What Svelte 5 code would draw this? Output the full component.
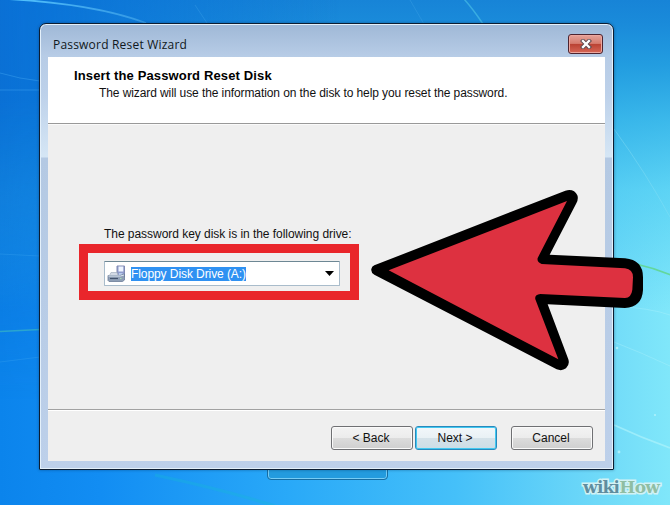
<script>
  const title = 'Password Reset Wizard';
  const drive = 'Floppy Disk Drive (A:)';
</script>

<main class="desktop">
  <svg class="wallpaper" viewBox="0 0 670 505" aria-hidden="true">
    <defs>
      <linearGradient id="streak"><stop stop-color="#55c6ff" /><stop offset="1" stop-color="#55b5f0" stop-opacity=".5" /></linearGradient>
    </defs>
    <g fill="none">
      <path d="M8 -1Q95 4 146 23" stroke="url(#streak)" stroke-width="1.8" />
      <path d="M0 73Q20 79 40 81M0 90h40" stroke="#3ba0f0" stroke-opacity=".5" />
      <path d="M0 254l40 2M0 362l40-5" stroke="#3aa4f2" stroke-opacity=".35" />
      <path d="M0 331.500L40 329.500" stroke="#2aa5cf" stroke-width="1.500" />
      <path d="M464 -1Q473 9 483 24" stroke="#4fc4e8" stroke-width="1.500" stroke-opacity=".6" />
      <path d="M410 0l14 24M195 5l12 18" stroke="#55b5f0" stroke-opacity=".25" />
      <path d="M614 129Q646 173 670 217" stroke="#8de2f5" stroke-opacity=".4" />
      <path d="M636 264Q654 268 671 275" stroke="#63d79c" stroke-width="1.700" />
      <path d="M614 342Q640 352 670 366M614 306Q650 308 670 315" stroke="#b2f4fb" stroke-opacity=".35" />
      <path d="M614 425Q642 438 670 448" stroke="#b4f5fb" stroke-width="1.800" stroke-opacity=".6" />
      <path d="M155 475Q225 490 275 506" stroke="#16b6d8" stroke-width="3" stroke-opacity=".35" />
    </g>
    <g fill="#c7f8fc" fill-opacity=".7">
      <circle cx="617" cy="348" r="1.300" /><circle cx="619" cy="452" r="1.400" /><circle cx="655" cy="415" r="1" />
    </g>
  </svg>

  <div class="behind"></div>

  <section class="window">
    <header class="titlebar">
      <span class="title">{title}</span>
      <button class="close" aria-label="Close">
        <svg width="12" height="10" viewBox="0 0 12 10">
          <path d="M3 2l6 6M9 2l-6 6" stroke="#5b4a50" stroke-width="4.200" stroke-linecap="square" />
          <path d="M3 2l6 6M9 2l-6 6" stroke="#fff" stroke-width="2.300" stroke-linecap="square" />
        </svg>
      </button>
    </header>
    <div class="client">
      <div class="heading">
        <h1><span>Insert the Password Reset Disk</span></h1>
        <p><span>The wizard will use the information on the disk to help you reset the password.</span></p>
      </div>
      <div class="body">
        <label for="drive"><span>The password key disk is in the following drive:</span></label>
        <div class="highlight">
          <div class="combo" id="drive">
            <svg class="disk" width="19" height="18" viewBox="0 0 19 18">
              <path d="M10 1h7.500v11H10z" fill="#8f9bcb" stroke="#8089b2" />
              <path d="M11.500 1.500h4.800v5h-4.800z" fill="#eef4ff" />
              <path d="M12 8h3.500v4H12z" fill="#b9cbed" />
              <path d="M4 7.500h6l1.500 4H2z" fill="#d3dae5" stroke="#a5b0c0" stroke-width=".7" />
              <path d="M1 10.500h12l4.500-1.500v6l-2 1.500H2l-1-1z" fill="#8f9fb6" stroke="#6b7c97" stroke-width=".8" />
              <path d="M1.500 11h12l3.500-1" fill="none" stroke="#dfe8f2" />
              <path d="M3 13.500h8" stroke="#42526c" stroke-width="1.200" />
              <path d="M13 13.500h1.500" stroke="#a8e0b1" stroke-width="1.200" />
            </svg>
            <span class="selected">{drive}</span>
            <svg class="caret" width="9" height="5" viewBox="0 0 9 5"><path d="M0 0h9L4.500 5z" /></svg>
          </div>
        </div>
      </div>
      <footer>
        <button class="btn"><span>&lt; Back</span></button>
        <button class="btn primary"><span>Next &gt;</span></button>
        <button class="btn cancel"><span>Cancel</span></button>
      </footer>
    </div>
  </section>

  <svg class="arrow" viewBox="0 0 930 600" aria-hidden="true">
    <path d="M43 256L616 32Q642 25 652 46Q656 56 649 70L569 224L795 235Q849 240 849 292V330Q846 381 795 384L563 373L625 538Q630 554 618 565Q606 574 590 568L43 284Q32 278 34 267Q35 260 43 256Z" />
    <path fill="#dd3140" d="M86 271L621 63L533 234Q530 246 545 252L795 265Q819 268 819 292L817 329Q814 353 795 354L541 342Q523 344 526 358L595 538Z" />
  </svg>

  <div class="watermark"><span>wiki</span><span class="how">How</span></div>
</main>

<style>
  :global(body) { margin: 0; }
  .desktop {
    position: relative; width: 670px; height: 505px; overflow: hidden;
    font-family: "Liberation Sans", Arial, sans-serif; color: #111;
    background: linear-gradient(90deg, #0b84ec 0, #128df3 15%, #29a9f8 43%, #45c0f9 68%, #70daf8 90%, #80e7fa 100%);
  }
  .desktop::before {
    content: ""; position: absolute; inset: 0;
    background: linear-gradient(180deg, #1784d7 0, #1a8bda 24px, rgba(27,151,222,.92) 65px, rgba(30,165,228,.7) 120px, rgba(50,188,238,.45) 190px, transparent 310px);
  }
  .desktop::after {
    content: ""; position: absolute; left: 0; top: 0; width: 340px; height: 400px;
    background: linear-gradient(90deg, #0a70d5, rgba(9,114,216,.9) 15%, transparent);
    -webkit-mask-image: linear-gradient(#000 25%, transparent);
    mask-image: linear-gradient(#000 25%, transparent);
  }
  .wallpaper { position: absolute; inset: 0; width: 670px; height: 505px; z-index: 1; }
  .behind {
    position: absolute; z-index: 1; left: 267px; top: 450px; width: 119px; height: 28px;
    border: 1px solid #176da2; border-radius: 4px;
    box-shadow: inset 0 0 0 1px #76ccf5; background: #239bde;
  }
  .window {
    position: absolute; z-index: 2; left: 39px; top: 23px; width: 575px; height: 447px;
    box-sizing: border-box; border: 1px solid #0c1d32; border-radius: 7px 7px 1px 1px;
    padding: 0 8px 8px; display: flex; flex-direction: column;
    background: linear-gradient(#9fb8d6 0, #b7cce6 32px, #bdd1ea 70px, #d5e6f5 133px, #b4c9e3 134px, #bdd0ea 100%);
    box-shadow: inset 0 0 0 1px #e4f0fa, 0 0 3px rgba(0,35,70,.45);
  }
  .titlebar { height: 33px; flex: none; display: flex; justify-content: space-between; align-items: flex-start; padding: 0 2px 0 5px; }
  .title { font: 12px/18px "Open Sans", "Noto Sans", sans-serif; margin-top: 12px; color: #101820; letter-spacing: .2px; white-space: nowrap; }
  .close {
    width: 35px; height: 20px; margin-top: 10px; padding: 0; display: flex; align-items: center; justify-content: center;
    border: 1px solid #4d2430; border-radius: 3px; box-shadow: inset 0 0 0 1px #eda79e;
    background: linear-gradient(#e5a399, #d67b6e 47%, #b94132 50%, #d76757);
  }
  .client { flex: 1; display: flex; flex-direction: column; background: #efefef; }
  .heading { height: 66px; background: #fff; border-bottom: 1px solid #999; box-shadow: 0 1px #fafafa; white-space: nowrap; }
  h1 { font-size: 13px; line-height: 16px; margin: 0; padding: 11px 0 0 26px; color: #000; letter-spacing: .14px; }
  p { font-size: 12px; line-height: 16px; margin: 0; padding: 1px 0 0 51px; letter-spacing: -.09px; }
  .body { flex: 1; padding-top: 102px; display: flex; flex-direction: column; align-items: flex-start; }
  label { font-size: 12px; line-height: 16px; padding-left: 56px; margin-bottom: 2px; white-space: nowrap; letter-spacing: -.04px; }
  .highlight { box-sizing: border-box; width: 280px; height: 56px; margin-left: 31px; border: 9px solid #e9262b; padding: 8px 10px 0 16px; }
  .combo {
    box-sizing: border-box; width: 236px; height: 25px; display: flex; align-items: center; padding: 0 5px 0 2px;
    border: 1px solid #a9bccb; border-top-color: #6d8794; border-radius: 1px; background: #fff;
  }
  .disk { flex: none; margin-right: 5px; }
  .selected { background: #2f91f2; color: #fff; font-size: 12px; line-height: 14px; height: 14px; white-space: nowrap; letter-spacing: -.08px; }
  .caret { margin-left: auto; }
  footer { height: 51px; flex: none; border-top: 1px solid #a2a2a2; box-shadow: inset 0 1px #fff; display: flex; justify-content: flex-end; align-items: flex-start; padding: 16px 12px 0 0; box-sizing: border-box; margin-bottom: 1px; }
  .btn {
    width: 82px; height: 24px; padding: 0; margin-right: 2px; border: 1px solid #6f7073; border-radius: 3px; box-sizing: border-box;
    box-shadow: inset 0 0 0 1px #fafafa; color: #111; font: 12px/20px "Liberation Sans", sans-serif;
    background: linear-gradient(#f3f3f3, #ececec 48%, #dcdcdc 51%, #cfcfcf);
  }
  .btn span { position: relative; left: -1px; }
  .primary { border-color: #2889bd; box-shadow: inset 0 0 0 1px #42c8f0; background: linear-gradient(#f2f7fa, #e9f1f5 48%, #d5e2e9 51%, #cbdde6); }
  .cancel { margin: 0 0 0 12px; }
  .arrow { position: absolute; z-index: 3; left: 360px; top: 180px; width: 310px; height: 200px; }
  .watermark {
    position: absolute; z-index: 3; left: 583px; top: 476px; font: bold 17px/22px "DejaVu Serif", serif; letter-spacing: -.75px;
    color: #5f8d9f; white-space: nowrap; -webkit-text-stroke: 3px #d1f2f5; paint-order: stroke fill;
  }
  .how { color: #8fbea4; }
</style>
